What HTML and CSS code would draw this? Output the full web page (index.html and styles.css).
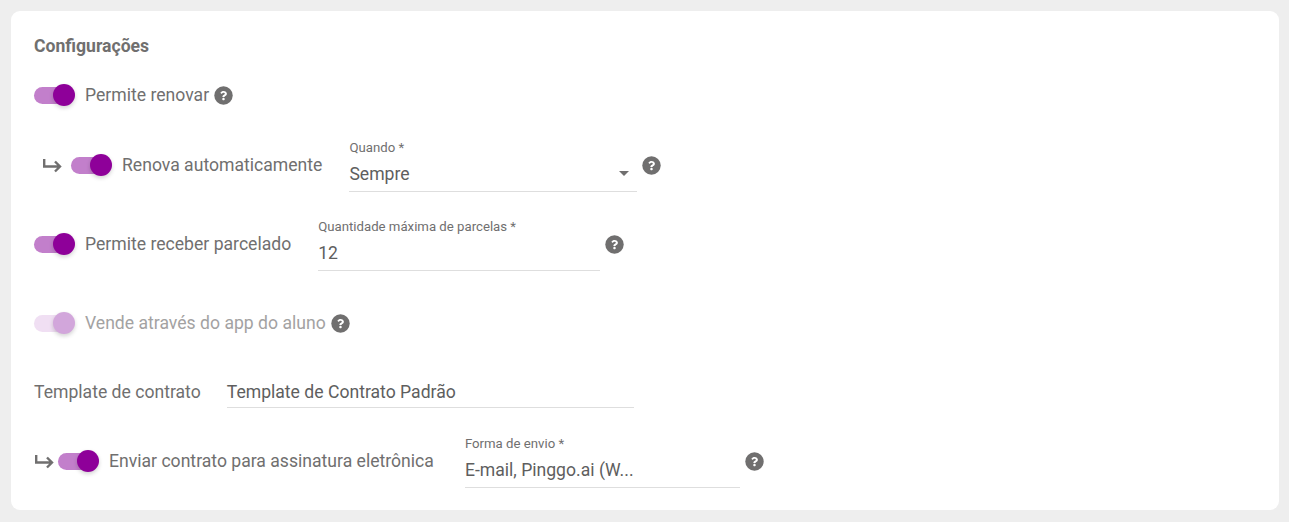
FILE: index.html

```html
<!DOCTYPE html>
<html>
<head>
   <meta charset="utf-8">
   <title>Configurações</title>
   <link rel="stylesheet" href="styles.css">
</head>
<body>
   <svg class="Defs" width="0" height="0">
      <symbol id="help" viewBox="0 0 512 512">
         <circle cx="256" cy="256" r="248"/>
         <path class="HelpMark" transform="translate(64 64) scale(0.75)" d="M262.655 90c-54.497 0-89.255 22.957-116.549 63.758-3.536 5.286-2.353 12.415 2.715 16.258l34.699 26.31c5.205 3.947 12.621 3.008 16.665-2.122 17.864-22.658 30.113-35.797 57.303-35.797 20.429 0 45.698 13.148 45.698 32.958 0 14.976-12.363 22.667-32.534 33.976C247.128 238.528 216 254.941 216 296v4c0 6.627 5.373 12 12 12h56c6.627 0 12-5.373 12-12v-1.333c0-28.462 83.186-29.647 83.186-106.667 0-58.002-60.165-102-116.531-102zM256 338c-25.365 0-46 20.635-46 46 0 25.364 20.635 46 46 46s46-20.636 46-46c0-25.365-20.635-46-46-46z"/>
      </symbol>
      <symbol id="arrow" viewBox="0 0 20 16"><path d="M2.200 2v7.500h15M13 4.500l5 5-5 5" fill="none" stroke="currentColor" stroke-width="2.400"/></symbol>
   </svg>

   <div class="Card">
      <h2 class="Title">Configurações</h2>

      <div class="Row RowRenovar">
         <span class="Toggle"><span class="Thumb"></span></span>
         <span class="Label">Permite renovar</span>
         <svg class="Help"><use href="#help"/></svg>
      </div>

      <div class="Row RowAuto">
         <svg class="Arrow ArrowAuto"><use href="#arrow"/></svg>
         <span class="Toggle"><span class="Thumb"></span></span>
         <span class="Label">Renova automaticamente</span>
         <div class="Field FieldQuando">
            <span class="FieldLabel">Quando *</span>
            <span class="FieldValue">Sempre<span class="Caret"></span></span>
         </div>
         <svg class="Help"><use href="#help"/></svg>
      </div>

      <div class="Row RowParcelado">
         <span class="Toggle"><span class="Thumb"></span></span>
         <span class="Label">Permite receber parcelado</span>
         <div class="Field FieldParcelas">
            <span class="FieldLabel">Quantidade máxima de parcelas *</span>
            <span class="FieldValue">12</span>
         </div>
         <svg class="Help"><use href="#help"/></svg>
      </div>

      <div class="Row RowApp Disabled">
         <span class="Toggle"><span class="Thumb"></span></span>
         <span class="Label">Vende através do app do aluno</span>
         <svg class="Help"><use href="#help"/></svg>
      </div>

      <div class="Row RowTemplate">
         <span class="Label">Template de contrato</span>
         <div class="Field FieldTemplate">
            <span class="FieldValue">Template de Contrato Padrão</span>
         </div>
      </div>

      <div class="Row RowEnviar">
         <svg class="Arrow ArrowEnviar"><use href="#arrow"/></svg>
         <span class="Toggle"><span class="Thumb"></span></span>
         <span class="Label">Enviar contrato para assinatura eletrônica</span>
         <div class="Field FieldForma">
            <span class="FieldLabel">Forma de envio *</span>
            <span class="FieldValue">E-mail, Pinggo.ai (W...</span>
         </div>
         <svg class="Help"><use href="#help"/></svg>
      </div>
   </div>
</body>
</html>
```

FILE: styles.css

```css
body
{
   margin: 0;
   padding: 11px 10px 12px 11px;
   background: #eeeeee;
   color: #706f6f;
   font-family: Roboto, sans-serif;
   font-size: 17.6px;
}
.Defs
{
   display: block;
   height: 0;
}
.Card
{
   height: 499px;
   box-sizing: border-box;
   padding: 23px 23px 0 23px;
   background: white;
   border-radius: 9px;
}
.Title
{
   margin: 0;
   height: 24px;
   font-size: 17.6px;
   font-weight: 700;
   line-height: 24px;
}
.Row
{
   display: flex;
   align-items: center;
}
.RowRenovar   { height: 24px; margin-top: 25px; }
.RowAuto      { height: 54px; margin-top: 31px; }
.RowParcelado { height: 54px; margin-top: 25px; }
.RowApp       { height: 24px; margin-top: 40px; }
.RowTemplate  { height: 32px; margin-top: 41px; }
.RowEnviar    { height: 54px; margin-top: 26px; }

.Toggle
{
   position: relative;
   flex: none;
   width: 38px;
   height: 17px;
   margin-right: 13px;
   background: #c27fcb;
   border-radius: 9px;
}
.Thumb
{
   position: absolute;
   top: -3px;
   right: -3px;
   width: 22px;
   height: 22px;
   background: #8e0099;
   border-radius: 50%;
   box-shadow: 0 2px 4px rgba(0, 0, 0, 0.18);
}
.Label
{
   flex: none;
   white-space: nowrap;
}
.Disabled .Toggle { background: #f0dff3; }
.Disabled .Thumb  { background: #d2a6db; }
.Disabled .Label  { color: #a3a2a2; }

.Arrow
{
   flex: none;
   width: 20px;
   height: 16px;
   color: #706f6f;
}
.ArrowAuto   { margin-left: 8px; margin-right: 9px; }
.ArrowEnviar { margin-right: 4px; }

.Help
{
   flex: none;
   width: 19px;
   height: 19px;
   margin-left: 5px;
   fill: #706f6f;
}
.HelpMark { fill: white; }

.Field
{
   flex: none;
   display: flex;
   flex-direction: column;
   box-sizing: border-box;
   height: 54px;
   border-bottom: 1px solid #dedede;
}
.FieldLabel
{
   height: 19px;
   font-size: 13.2px;
   line-height: 20px;
}
.FieldValue
{
   position: relative;
   height: 34px;
   color: #5e5e5e;
   line-height: 34px;
}
.FieldQuando   { width: 288px; margin-left: 27px; }
.FieldParcelas { width: 282px; margin-left: 27px; }
.FieldForma    { width: 275px; margin-left: 31px; }
.FieldTemplate { width: 407px; height: 32px; margin-left: 26px; }
.FieldTemplate .FieldValue { height: 31px; line-height: 33px; }
.Caret
{
   position: absolute;
   top: 14px;
   right: 8.500px;
   border-left: 5.500px solid transparent;
   border-right: 5.500px solid transparent;
   border-top: 5.500px solid #706f6f;
}
```
